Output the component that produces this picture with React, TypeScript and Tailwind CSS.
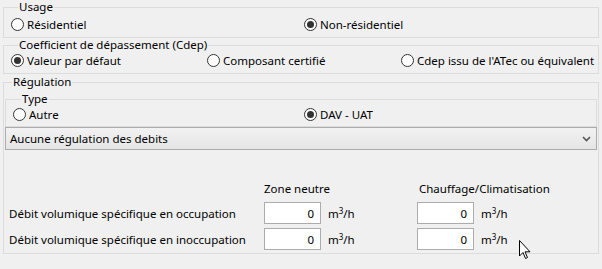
import React from "react";

function Radio({ checked, label }: { checked?: boolean; label: string }) {
  return (
    <span className="flex items-center gap-[3px]">
      <span className="flex h-[13px] w-[13px] shrink-0 items-center justify-center rounded-full border border-[#333333] bg-white">
        {checked && <span className="h-[7px] w-[7px] rounded-full bg-[#333333]" />}
      </span>
      <span className="whitespace-nowrap">{label}</span>
    </span>
  );
}

function NumInput() {
  return (
    <div className="flex h-[22px] w-[57px] items-center justify-end border border-[#acacac] bg-white pr-[6px]">0</div>
  );
}

function Unit() {
  return (
    <span className="ml-[7px]">
      m<sup className="text-[8px]">3</sup>/h
    </span>
  );
}

export default function App() {
  return (
    <div
      className="relative h-[269px] w-[602px] overflow-hidden bg-[#f0f0f0] px-[3px] text-[11.5px] leading-[15px] text-black"
      style={{ fontFamily: '"Noto Sans", "Open Sans", sans-serif' }}
    >
      <fieldset className="h-[38px] border border-[#dcdcdc] pl-[7px]">
        <legend className="ml-[7px] px-[1px] leading-[14px]">Usage</legend>
        <div className="flex pt-[3px]">
          <div className="w-[293px]">
            <Radio label="Résidentiel" />
          </div>
          <Radio checked label="Non-résidentiel" />
        </div>
      </fieldset>
      <fieldset className="h-[36px] border border-[#dcdcdc] pl-[7px]">
        <legend className="ml-[7px] px-[1px] leading-[14px]">Coefficient de dépassement (Cdep)</legend>
        <div className="flex pt-[1px]">
          <div className="w-[196px]">
            <Radio checked label="Valeur par défaut" />
          </div>
          <div className="w-[194px]">
            <Radio label="Composant certifié" />
          </div>
          <Radio label="Cdep issu de l'ATec ou équivalent" />
        </div>
      </fieldset>
      <fieldset className="mt-[1px] h-[179px] border border-[#dcdcdc] px-[1px]">
        <legend className="ml-[7px] px-[1px] leading-[14px]">Régulation</legend>
        <fieldset className="mt-[3px] h-[35px] border border-[#dcdcdc] pl-[7px]">
          <legend className="ml-[8px] px-[1px] leading-[14px]">Type</legend>
          <div className="flex pt-[1px]">
            <div className="w-[291px]">
              <Radio label="Autre" />
            </div>
            <Radio checked label="DAV - UAT" />
          </div>
        </fieldset>
        <div className="flex h-[23px] items-center justify-between border border-[#acacac] bg-gradient-to-b from-[#f2f2f2] to-[#e5e5e5] pl-[4px] pr-[5px]">
          <span>Aucune régulation des debits</span>
          <svg width="9" height="6" viewBox="0 0 9 6">
            <path d="M1 1 L4.5 4.5 L8 1" fill="none" stroke="#555" strokeWidth="1.6" />
          </svg>
        </div>
        <div className="mt-[31px] grid grid-cols-[259px_153px_auto] items-center">
          <div />
          <div className="pb-[6px]">Zone neutre</div>
          <div className="pb-[6px] pl-[2px]">Chauffage/Climatisation</div>
          <div className="pl-[4px]">Débit volumique spécifique en occupation</div>
          <div className="flex items-center">
            <NumInput />
            <Unit />
          </div>
          <div className="flex items-center">
            <NumInput />
            <Unit />
          </div>
          <div className="pl-[4px] pt-[4px]">Débit volumique spécifique en inoccupation</div>
          <div className="flex items-center pt-[4px]">
            <NumInput />
            <Unit />
          </div>
          <div className="flex items-center pt-[4px]">
            <NumInput />
            <Unit />
          </div>
        </div>
      </fieldset>
      <svg
        className="absolute left-[519px] top-[240px]"
        width="13"
        height="20"
        viewBox="0 0 13 20"
      >
        <path d="M0.5 0.5 L0.5 16 L4 12.5 L6.5 18.5 L8.5 17.5 L6 11.8 L11 11.8 Z" fill="white" stroke="black" strokeWidth="1" strokeLinejoin="round" />
      </svg>
    </div>
  );
}
